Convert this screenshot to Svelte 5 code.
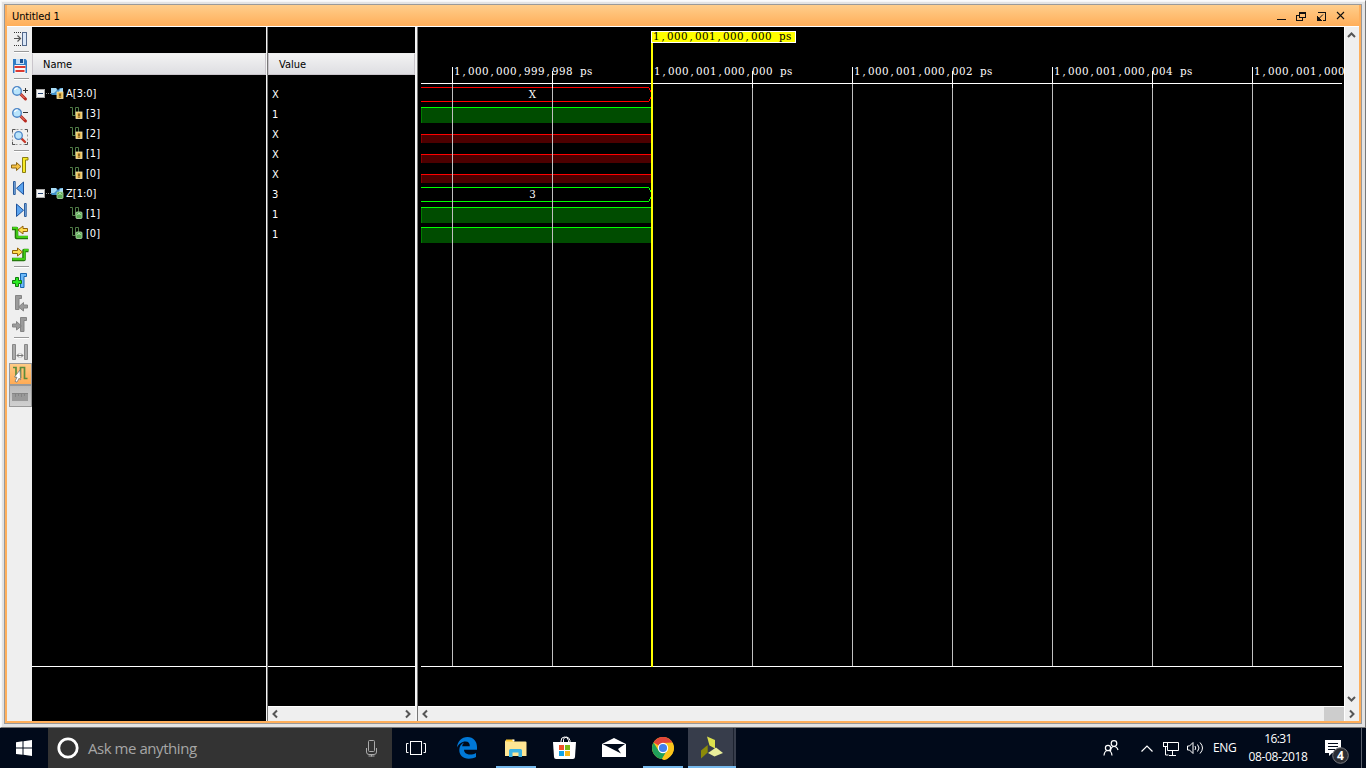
<script>
  const names = [
    { label: 'A[3:0]', value: 'X', bus: true, kind: 'in' },
    { label: '[3]', value: '1', kind: 'in' },
    { label: '[2]', value: 'X', kind: 'in' },
    { label: '[1]', value: 'X', kind: 'in' },
    { label: '[0]', value: 'X', kind: 'in' },
    { label: 'Z[1:0]', value: '3', bus: true, kind: 'out' },
    { label: '[1]', value: '1', kind: 'out' },
    { label: '[0]', value: '1', kind: 'out' }
  ];
  const grid = [452, 552, 752, 852, 952, 1052, 1152, 1252];
  const ticks = [
    { x: 454, t: '1,000,000,999,998 ps' },
    { x: 654, t: '1,000,001,000,000 ps' },
    { x: 854, t: '1,000,001,000,002 ps' },
    { x: 1054, t: '1,000,001,000,004 ps' },
    { x: 1254, t: '1,000,001,000' }
  ];
  const cells = (x, t) => [...t].map((c, i) => x + i * 7 + (c === ',' ? 1.5 : 0)).join(' ');
  const high = [107, 207, 227];
  const unknown = [134, 154, 174];
  const buses = [
    { y: 87, c: '#f00', v: 'X' },
    { y: 187, c: '#0f0', v: '3' }
  ];
</script>

{#snippet sep()}<div class="sep"></div>{/snippet}

{#snippet lens(y)}
  <path d="M20.5 {y + 3}l5 5" stroke="#b92a20" stroke-width="3" stroke-linecap="round" />
  <path d="M20 {y + 2.5}l4.5 4.5" stroke="#f09080" stroke-width="1" />
  <circle cx="17" cy={y} r="4.3" fill="#b9e4fb" stroke="#4d86c6" stroke-width="1.4" />
  <path d="M14.5 {y - 1}q1-2.3 3.2-2" stroke="#fff" stroke-width="1.3" fill="none" />
{/snippet}

{#snippet badge(kind)}
  {#if kind === 'in'}
    <rect x="6" y="5" width="6" height="6.500" fill="#e8bc55" stroke="#f8e9b4" stroke-width=".8" />
    <path d="M9 6.500v2.400M9 9.500v1.300" stroke="#5b3d0c" stroke-width="1.400" />
  {:else}
    <rect x="6" y="5" width="6" height="6.500" rx="1" fill="#5daa55" stroke="#b7dfb0" stroke-width=".8" />
    <path d="M7.500 7.500q1.500-2 3 0" stroke="#d8f3d4" fill="none" />
  {/if}
{/snippet}

<div class="screen">
  <div class="frame">
    <div class="inner">
      <div class="title">
        <span>Untitled 1</span>
        <svg width="76" height="21" viewBox="1274 5 76 21" fill="none" stroke="#111" shape-rendering="crispEdges">
          <path d="M1277 19.5h9" />
          <path d="M1299.5 12.5h6v5h-6zM1296.5 15.5v5h6v-3M1296 15.5h3M1299 13.5h7" />
          <path d="M1318 12.5h7.5v8h-3" />
          <path d="M1323 14.5l-4 4" shape-rendering="auto" />
          <path d="M1317 16v4.500h4.500z" fill="#111" stroke="none" />
          <path d="M1337 12l7 7M1344 12l-7 7" shape-rendering="auto" stroke-width="1.1" />
        </svg>
      </div>
      <div class="body">
        <div class="tools">
          <svg height="23" viewBox="7 27 25 23">
            <path d="M14 32.500h8M14 45.500h8" stroke="#333" stroke-dasharray="1 1" fill="none" />
            <path d="M14 38.500h6M17.500 35.500l3 3-3 3" stroke="#555" stroke-width="1.200" fill="none" />
            <rect x="22.500" y="32.500" width="4" height="13" fill="#dbe7f7" stroke="#54698c" />
          </svg>
          {@render sep()}
          <svg height="23" viewBox="7 54 25 23">
            <path d="M13 59h12.500l1.500 1.500V73H13z" fill="#2f7cc6" />
            <rect x="16" y="59" width="8" height="5" fill="#c3def7" />
            <rect x="20" y="59" width="3" height="4" fill="#174f92" />
            <rect x="14.500" y="65" width="11" height="8" fill="#f7f7f7" />
            <path d="M14.500 67h11M15.500 71h9" stroke="#dc3a31" stroke-width="1.800" />
          </svg>
          {@render sep()}
          <svg height="68" viewBox="7 81 25 68">
            {@render lens(91)}
            <path d="M23 90.500h5M25.500 88v5" stroke="#333" />
            {@render lens(113)}
            <path d="M23 112.500h5" stroke="#333" />
            <rect x="12.500" y="129.500" width="15" height="15" fill="none" stroke="#999" stroke-dasharray="2 2" />
            <path d="M12.500 132v-2.500h3M25 129.500h2.500v2.500M27.500 142v2.500h-2.500M15 144.500h-2.500v-2.500" fill="none" stroke="#555" />
            <path d="M21 138l4 4" stroke="#c63a2c" stroke-width="2.400" stroke-linecap="round" />
            <circle cx="18.500" cy="135.500" r="3.800" fill="#b9e4fb" stroke="#4d86c6" stroke-width="1.300" />
          </svg>
          {@render sep()}
          <svg height="113" viewBox="7 152 25 113" stroke-linejoin="round">
            <path d="M22.500 172.500v-15h5.500v2.500h-2.500v12.500z" fill="#f7ea28" stroke="#8a7e12" />
            <path d="M11.500 165h5v-2.500l4.500 4-4.500 4V168h-5z" fill="#f5c244" stroke="#8e6818" />
            <rect x="13.500" y="181.500" width="1.700" height="13" fill="#7fb3ea" stroke="#2d5d9c" />
            <path d="M23.500 182v12.500l-7-6.250z" fill="#5ba4ef" stroke="#1f529b" />
            <path d="M16.500 204v12.500l7-6.250z" fill="#5ba4ef" stroke="#1f529b" />
            <rect x="24.500" y="203.500" width="1.700" height="13" fill="#7fb3ea" stroke="#2d5d9c" />
            <path d="M12 228.500h4.500v9H28" fill="none" stroke="#247a0c" stroke-width="3.600" />
            <path d="M12.500 228h4.500v9H28" fill="none" stroke="#43ce16" stroke-width="1.800" />
            <path d="M27.500 228.500h-4.500V226l-5 4 5 4v-2.500h4.500z" fill="#ffdc4e" stroke="#94620a" />
            <path d="M12 259.500h12v-9h4.500" fill="none" stroke="#247a0c" stroke-width="3.600" />
            <path d="M12.500 259h12v-9h4" fill="none" stroke="#43ce16" stroke-width="1.800" />
            <path d="M12.500 250.500h5V248l5 4-5 4v-2.500h-5z" fill="#ffdc4e" stroke="#94620a" />
          </svg>
          {@render sep()}
          <svg height="68" viewBox="7 268 25 68">
            <path d="M20.500 287.500v-14h6v3h-2.500v11z" fill="#6db8f8" stroke="#1765b0" />
            <path d="M15.500 277.500h3v3h3v3h-3v3h-3v-3h-3v-3h3z" fill="#2bea22" stroke="#127a0e" />
            <path d="M15.500 309.500v-14h6v3h-2.500v11zM27.500 305h-4v-2.500l-5 4.500 5 4V308h4z" fill="#9b9b9b" stroke="#858585" />
            <path d="M20.500 331.500v-14h6v3h-2.500v11zM12.500 324h4v-2.500l5 4.500-5 4v-3h-4z" fill="#9b9b9b" stroke="#858585" />
          </svg>
          {@render sep()}
          <svg height="24" viewBox="7 339 25 24">
            <path d="M12.500 344.500h3v15h-3zM24.500 344.500h3v15h-3z" fill="#aaa" stroke="#888" />
            <path d="M17 355.500h6M19 353.500l-2 2 2 2M21 353.500l2 2-2 2" stroke="#777" fill="none" />
          </svg>
          <div class="tool on">
            <svg width="20" height="20" viewBox="10 364 20 20">
              <path d="M13 367.500h3v10M20.500 378v-10.500h4v11h3" fill="none" stroke="#5b8c3a" stroke-width="1.700" />
              <path d="M20 370l-5.500 7 2.500.3-2 4 2 .9 2-3.900 1.700 1.500z" fill="#fff" stroke="#777" stroke-width=".8" />
            </svg>
          </div>
          <div class="tool off">
            <svg width="20" height="20" viewBox="10 386 20 20">
              <rect x="12" y="393" width="16" height="8" fill="#999" />
              <path d="M12 393.500h16M15.500 394v3M18.500 394v2M21.500 394v3M24.500 394v2" stroke="#858585" />
            </svg>
          </div>
        </div>

        <div class="col names">
          <div class="gap"></div>
          <div class="head">Name</div>
          <div class="rows">
            {#each names as n}
              <div class="row" class:child={!n.bus}>
                {#if n.bus}
                  <svg width="28" height="13" viewBox="-15 0 28 13">
                    <rect x="-14.500" y="2.500" width="8" height="8" fill="#f4f4f4" stroke="#aaa" />
                    <path d="M-13 6.500h5" stroke="#24406e" />
                    <path d="M-5 6.500h5" stroke="#888" stroke-dasharray="1 1" />
                    <path d="M0 1h5l2 2 2-2h3v6l-3 1H1L0 7z" fill="#3f8fc9" />
                    <path d="M0 1h5l1 2-3 3H0zM9 2l3-1v4H8z" fill="#a9dbf5" />
                    {@render badge(n.kind)}
                  </svg>
                {:else}
                  <svg width="13" height="13" viewBox="0 0 13 13">
                    <path d="M0 .5h2.500v8h3v-8h3v7" fill="none" stroke="#4e7a45" />
                    {@render badge(n.kind)}
                  </svg>
                {/if}
                <span>{n.label}</span>
              </div>
            {/each}
          </div>
          <div class="foot"></div>
        </div>

        <div class="split thin"></div>

        <div class="col values">
          <div class="gap"></div>
          <div class="head">Value</div>
          <div class="rows">
            {#each names as n}
              <div class="row">{n.value}</div>
            {/each}
          </div>
          <div class="foot"></div>
          <div class="hbar">
            <svg width="10" height="14" viewBox="0 0 10 14"><path d="M8 3.500L4.500 7 8 10.500" /></svg>
            <svg width="10" height="14" viewBox="0 0 10 14"><path d="M2 3.500L5.500 7 2 10.500" /></svg>
          </div>
        </div>

        <div class="split"></div>

        <div class="wave">
          <svg class="plot" width="926" height="679" viewBox="418 27 926 679" shape-rendering="crispEdges">
            {#each high as y}
              <rect x="421" {y} width="232" height="16" fill="#004c00" />
              <rect x="421" {y} width="1" height="16" fill="#007d00" />
              <rect x="421" {y} width="231" height="1" fill="#0f0" />
            {/each}
            {#each unknown as y}
              <rect x="421" {y} width="232" height="9" fill="#4c0000" />
              <rect x="421" {y} width="1" height="9" fill="#800000" />
              <rect x="421" {y} width="231" height="1" fill="#f00" />
            {/each}
            {#each buses as b}
              <path d="M421 {b.y + 0.5}h228M421 {b.y + 14.5}h228M649.500 {b.y + 1}v2M650.500 {b.y + 3}v2M650.500 {b.y + 10}v2M649.500 {b.y + 12}v2" stroke={b.c} fill="none" />
              <text x="532.500" y={b.y + 11} text-anchor="middle">{b.v}</text>
            {/each}
            {#each grid as x}
              <rect {x} y="84" width="1" height="582" fill="#c0c0c0" />
              <rect {x} y={x % 200 === 52 ? 67 : 71} width="1" height="17" fill="#fff" />
            {/each}
            <rect x="421" y="83" width="921" height="1" fill="#fff" />
            <rect x="421" y="666" width="921" height="1" fill="#fff" />
            {#each ticks as k}
              <text x={cells(k.x, k.t)} y="75">{k.t}</text>
            {/each}
            <rect x="651" y="43" width="2" height="624" fill="#ff0" />
            <rect x="651.500" y="31.500" width="144" height="11" fill="#ff0" stroke="#fff" />
            <text x={cells(653, '1,000,001,000,000 ps')} y="40" class="dark">1,000,001,000,000 ps</text>
          </svg>
          <div class="hbar">
            <svg width="14" height="14" viewBox="0 0 14 14"><path d="M9 3.500L5.500 7 9 10.500" /></svg>
            <div class="thumb"></div>
          </div>
        </div>

        <div class="vbar">
          <svg width="14" height="18" viewBox="0 0 14 18"><path d="M3 10L6.500 6.500 10 10" /></svg>
          <div class="ends">
            <svg width="14" height="16" viewBox="0 0 14 16"><path d="M3 6L6.500 9.500 10 6" /></svg>
            <svg width="14" height="14" viewBox="0 0 14 14"><path d="M5 3.500L8.500 7 5 10.500" /></svg>
          </div>
        </div>
      </div>
    </div>
  </div>

  <div class="taskbar">
    <svg width="48" height="40" viewBox="0 728 48 40">
      <path d="M16 742.300l6.500-1v6.200H16zM23.500 741.200l8.500-1.200v7.500h-8.500zM16 748.500h6.500v6.300l-6.500-.9zM23.500 748.500H32v7.500l-8.500-1.200z" fill="#fff" />
    </svg>
    <div class="search">
      <svg width="40" height="40" viewBox="48 728 40 40"><circle cx="68" cy="748" r="9.200" fill="none" stroke="#fff" stroke-width="2.800" /></svg>
      <span>Ask me anything</span>
      <svg width="40" height="40" viewBox="352 728 40 40" fill="none" stroke="#aaa">
        <rect x="368.500" y="740.500" width="6" height="11" rx="1" />
        <path d="M366.500 748v4q0 2.500 2.500 2.500h5q2.500 0 2.500-2.500v-4M371.500 755v1.500M368.500 756h6" />
      </svg>
    </div>
    <svg width="48" height="40" viewBox="392 728 48 40" fill="none" stroke="#fff">
      <rect x="410.500" y="741.500" width="11" height="13" />
      <path d="M408.500 743.500h-2v9h2M423.500 743.500h2v9h-2" />
    </svg>
    <svg width="56" height="40" viewBox="440 728 56 40">
      <path d="M457 747.500C457.500 741.500 461.500 737 467.500 737c6 0 9.500 4.500 9.500 10v2.800h-13c.2 3.400 3 4.700 6 4.700 2.300 0 4.300-.6 6-1.600v4.200c-2 1.100-4.500 1.600-7.200 1.600-6 0-9.500-3.400-9.500-8.700 0-3.300 1.700-6 4.800-7.500-1.200 1.200-1.700 2.500-1.900 3.700h7.600c0-2.700-1.200-4.700-4.300-4.700-3.600 0-6.800 2.400-8.500 6z" fill="#0078d7" />
    </svg>
    <svg width="48" height="40" viewBox="492 728 48 40">
      <path d="M505 741.500q0-1.500 1.500-1.500h6.500l1.500 1.500h11q1 0 1 1V756H505z" fill="#ffe694" />
      <path d="M506 739.500h7.500v2H506z" fill="#ffc933" />
      <path d="M512.500 739.500h2v1.500h-2z" fill="#fff" />
      <path d="M509 757v-6.500q0-1.500 1.500-1.500h10q1.500 0 1.500 1.500v6.500h-3.500v-4.500h-6v4.500z" fill="#3cb4e4" />
      <rect x="496" y="766" width="40" height="2" fill="#76b9ed" />
    </svg>
    <svg width="48" height="40" viewBox="540 728 48 40">
      <path d="M561 744v-3q0-4 3.500-4t4 3.500v3M563.500 744v-4.500q.5-2.500 3-2.500t3.500 3.500v3" fill="none" stroke="#fff" />
      <path d="M553 742h23l-1 15q-.2 2-2 2h-17q-1.800 0-2-2z" fill="#fff" />
      <rect x="559" y="745" width="5" height="5" fill="#f0532b" /><rect x="565" y="745" width="5" height="5" fill="#7cba16" />
      <rect x="559" y="751" width="5" height="5" fill="#13a3e6" /><rect x="565" y="751" width="5" height="5" fill="#f9b718" />
    </svg>
    <svg width="50" height="40" viewBox="588 728 50 40">
      <path d="M602 744l12-6 12 6v13h-24z" fill="#fff" />
      <path d="M602.500 744h22.500l-7 5 3 4.500z" fill="#010a1a" />
    </svg>
    <svg width="50" height="40" viewBox="638 728 50 40">
      <circle cx="663" cy="748" r="11" fill="#fbc41b" />
      <path d="M663 748L653.500 742.500A11 11 0 0 1 672.500 742.500L663 743z" fill="#e2453a" />
      <path d="M653.500 742.500A11 11 0 0 0 662 759l5-8.500-8.500 0z" fill="#1fa05a" />
      <path d="M663 743h9.700q3 8-2.500 13.500T662 759l5.500-9z" fill="#fbc41b" />
      <circle cx="663" cy="748" r="5.200" fill="#fff" /><circle cx="663" cy="748" r="4.100" fill="#4280ee" />
      <rect x="643" y="766" width="40" height="2" fill="#76b9ed" />
    </svg>
    <svg class="active" width="48" height="40" viewBox="688 728 48 40">
      <path d="M707 736.500l8 3.500v8.500l-5.500-3z" fill="#dce14d" />
      <path d="M707.700 745v7.500l-6.700 6v-8z" fill="#8c8b09" />
      <path d="M716 747.500l7 5.500-8.500 3.500-6.500-3.500z" fill="#e9ee9b" />
      <rect x="733" y="728" width="1" height="40" fill="#1c222f" />
      <rect x="688" y="766" width="48" height="2" fill="#76b9ed" />
    </svg>
    <div class="space"></div>
    <svg width="110" height="40" viewBox="1098 728 110 40" fill="none" stroke="#fff" stroke-width="1.200">
      <circle cx="1114" cy="743.500" r="2.800" /><path d="M1110.500 751q.5-4.500 3.500-4.500t4 3.500" />
      <circle cx="1108" cy="748" r="2.600" /><path d="M1104 755.500q.5-5 4-5t4 5" />
      <path d="M1141.500 751.500l5.500-5.500 5.500 5.500" />
      <path d="M1168 742.500h10.500v8h-11v-4M1172.500 751v4M1169 755.500h7M1165.500 747v8h3" stroke-width="1" />
      <rect x="1163.500" y="742.500" width="4" height="4" stroke-width="1" />
      <path d="M1187.500 746h2l3.500-3.500v11l-3.500-3.500h-2zM1195 746q1.500 2 0 4M1197.500 744.500q3 3.500 0 7M1200 742.500q5 5.500 0 11" stroke-width="1" />
    </svg>
    <div class="lang">ENG</div>
    <div class="clock"><span>16:31</span><span class="date">08-08-2018</span></div>
    <svg width="50" height="40" viewBox="1316 728 50 40">
      <path d="M1325 740h16v13h-9l-3 3v-3h-4z" fill="#fff" />
      <path d="M1328 743.500h10M1328 746.500h10M1328 749.500h7" stroke="#010a1a" />
      <circle cx="1340.500" cy="755.500" r="7.800" fill="#2b2d33" stroke="#77797e" />
      <text x="1340.500" y="760" text-anchor="middle" class="count">4</text>
      <rect x="1361" y="728" width="1" height="40" fill="#5b616d" />
    </svg>
  </div>
</div>

<style>
  :global(body) { margin: 0; overflow: hidden; }
  .screen { width: 1366px; height: 768px; display: flex; flex-direction: column; font: 11px/14px "DejaVu Sans Condensed", "DejaVu Sans", sans-serif; font-stretch: condensed; color: #000; }
  svg { display: block; flex: none; }
  .frame { box-sizing: border-box; height: 728px; padding: 3px 3px 2px 2px; background: #e3e3e3; border: 1px solid #fbfbfb; border-right-color: #777; border-bottom-color: #777; box-shadow: inset 1px 1px #f6f6f6; }
  .inner { box-sizing: border-box; height: 720px; margin-left: 1px; border: 1px solid #999; padding: 0 2px 2px; background: #ffaf5b; display: flex; flex-direction: column; }
  .title { height: 21px; flex: none; display: flex; justify-content: space-between; align-items: center; padding: 0 9px 0 5px; background: linear-gradient(#ffce8b, #ffae5a); }
  .title span { padding-top: 2px; letter-spacing: -0.1px; }
  .body { flex: 1; min-height: 0; display: flex; border-top: 1px solid #fff; background: #efefef; }
  .tools { width: 25px; flex: none; background: #efefef; }
  .tools > svg { width: 25px; }
  .sep { height: 4px; padding: 1px 3px 0 7px; box-sizing: border-box; }
  .sep::before { content: ''; display: block; height: 1px; background: #999; border-bottom: 1px solid #fff; }
  .sep:nth-of-type(n+3) { height: 3px; }
  .tool { box-sizing: border-box; width: 23px; height: 22px; margin-left: 2px; border: 1px solid #999; }
  .on { background: linear-gradient(#ffca86, #ffab55); }
  .off { background: linear-gradient(#bbb, #d0d0d0); }
  .col { display: flex; flex-direction: column; flex: none; background: #000; color: #fff; }
  .names { width: 234px; }
  .values { width: 147px; }
  .gap { height: 26px; flex: none; }
  .head { box-sizing: border-box; height: 22px; flex: none; padding: 4px 0 0 10px; color: #000; background: linear-gradient(#f3f3f3, #dedee2); border: 1px solid #c9c5cb; border-top-color: #eee; }
  .rows { box-sizing: border-box; height: 592px; flex: none; padding-top: 8px; border-bottom: 1px solid #fff; }
  .row { height: 20px; display: flex; align-items: center; padding-left: 4px; }
  .row span { margin: 2px 0 0 2px; }
  .row.child { padding-left: 38px; }
  .row.child span { margin-left: 3px; }
  .values .row { padding: 4px 0 0 4px; height: 16px; }
  .foot { flex: 1; }
  .split { box-sizing: border-box; width: 3px; flex: none; background: #f5f5f5; border-right: 1px solid #777; }
  .thin { width: 2px; }
  .hbar { box-sizing: border-box; height: 15px; flex: none; display: flex; justify-content: space-between; background: #efefef; border-top: 1px solid #fff; padding: 0 1px; }
  .hbar path, .vbar path { fill: none; stroke: #555; stroke-width: 2; }
  .wave { width: 926px; flex: none; display: flex; flex-direction: column; background: #000; }
  .wave .hbar { padding: 0; }
  .plot text { font: 10.3px "DejaVu Serif", serif; fill: #fff; }
  .plot text.dark { fill: #000; }
  .thumb { width: 20px; background: #cdcdcd; }
  .vbar { box-sizing: border-box; width: 15px; flex: none; display: flex; flex-direction: column; justify-content: space-between; border-left: 1px solid #fff; background: #efefef; }
  .taskbar { height: 40px; display: flex; background: #010a1a; color: #fff; font-family: "Open Sans", "Noto Sans", sans-serif; font-stretch: normal; }
  .search { width: 344px; display: flex; align-items: center; background: #333; }
  .search span { flex: 1; font-size: 15px; line-height: 20px; letter-spacing: -0.45px; color: #a6a6a6; }
  .taskbar > svg:nth-of-type(3) { margin-right: -4px; }
  .active { background: #373d4b; }
  .space { flex: 1; }
  .lang { width: 32px; padding: 13px 0 0 5px; box-sizing: border-box; font-size: 12px; letter-spacing: -0.4px; }
  .clock { width: 76px; display: flex; flex-direction: column; align-items: center; padding-top: 2px; box-sizing: border-box; font-size: 12px; line-height: 18px; letter-spacing: -0.6px; }
  .date { letter-spacing: -0.35px; }
  .count { font: bold 12px "Open Sans", sans-serif; fill: #fff; }
</style>
